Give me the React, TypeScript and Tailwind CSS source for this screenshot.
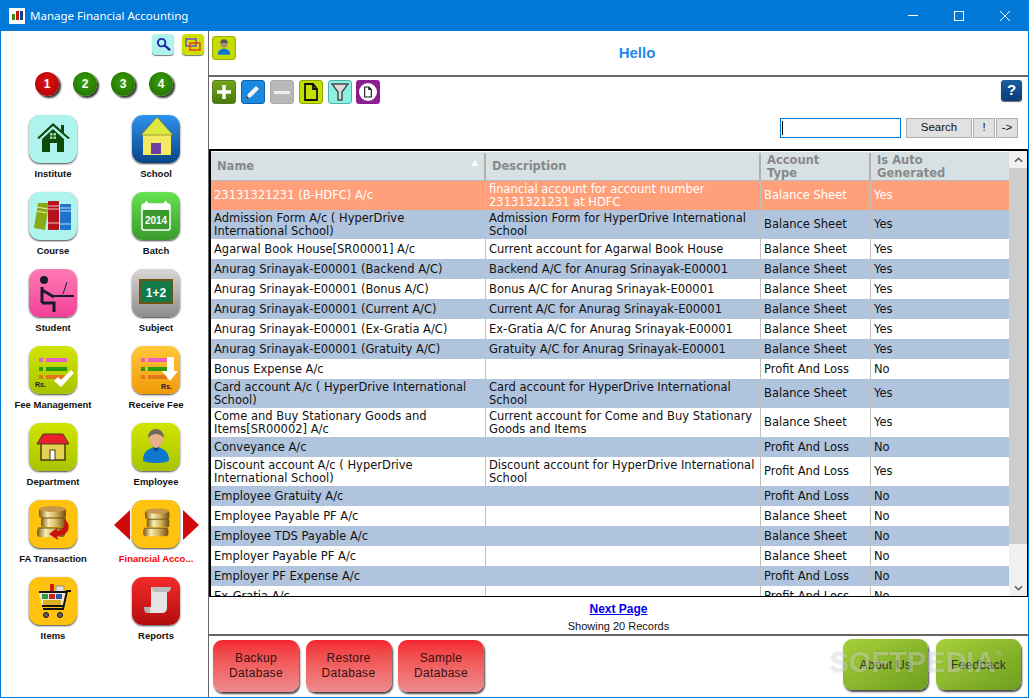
import type { ReactNode } from 'react';

type Row = { name: string; desc?: string; type: string; auto: string; h: 'one' | 'two'; bg: 'sel' | 'alt' | 'plain' };

const rows: Row[] = [
  { name: '23131321231 (B-HDFC) A/c', desc: 'financial account for account number 23131321231 at HDFC', type: 'Balance Sheet', auto: 'Yes', h: 'two', bg: 'sel' },
  { name: 'Admission Form A/c ( HyperDrive International School)', desc: 'Admission Form for HyperDrive International School', type: 'Balance Sheet', auto: 'Yes', h: 'two', bg: 'alt' },
  { name: 'Agarwal Book House[SR00001] A/c', desc: 'Current account for Agarwal Book House', type: 'Balance Sheet', auto: 'Yes', h: 'one', bg: 'plain' },
  { name: 'Anurag Srinayak-E00001 (Backend A/C)', desc: 'Backend A/C for Anurag Srinayak-E00001', type: 'Balance Sheet', auto: 'Yes', h: 'one', bg: 'alt' },
  { name: 'Anurag Srinayak-E00001 (Bonus A/C)', desc: 'Bonus A/C for Anurag Srinayak-E00001', type: 'Balance Sheet', auto: 'Yes', h: 'one', bg: 'plain' },
  { name: 'Anurag Srinayak-E00001 (Current A/C)', desc: 'Current A/C for Anurag Srinayak-E00001', type: 'Balance Sheet', auto: 'Yes', h: 'one', bg: 'alt' },
  { name: 'Anurag Srinayak-E00001 (Ex-Gratia A/C)', desc: 'Ex-Gratia A/C for Anurag Srinayak-E00001', type: 'Balance Sheet', auto: 'Yes', h: 'one', bg: 'plain' },
  { name: 'Anurag Srinayak-E00001 (Gratuity A/C)', desc: 'Gratuity A/C for Anurag Srinayak-E00001', type: 'Balance Sheet', auto: 'Yes', h: 'one', bg: 'alt' },
  { name: 'Bonus Expense A/c', type: 'Profit And Loss', auto: 'No', h: 'one', bg: 'plain' },
  { name: 'Card account A/c ( HyperDrive International School)', desc: 'Card account for HyperDrive International School', type: 'Balance Sheet', auto: 'Yes', h: 'two', bg: 'alt' },
  { name: 'Come and Buy Stationary Goods and Items[SR00002] A/c', desc: 'Current account for Come and Buy Stationary Goods and Items', type: 'Balance Sheet', auto: 'Yes', h: 'two', bg: 'plain' },
  { name: 'Conveyance A/c', type: 'Profit And Loss', auto: 'No', h: 'one', bg: 'alt' },
  { name: 'Discount account A/c ( HyperDrive International School)', desc: 'Discount account for HyperDrive International School', type: 'Profit And Loss', auto: 'Yes', h: 'two', bg: 'plain' },
  { name: 'Employee Gratuity A/c', type: 'Profit And Loss', auto: 'No', h: 'one', bg: 'alt' },
  { name: 'Employee Payable PF A/c', type: 'Balance Sheet', auto: 'No', h: 'one', bg: 'plain' },
  { name: 'Employee TDS Payable A/c', type: 'Balance Sheet', auto: 'No', h: 'one', bg: 'alt' },
  { name: 'Employer Payable PF A/c', type: 'Balance Sheet', auto: 'No', h: 'one', bg: 'plain' },
  { name: 'Employer PF Expense A/c', type: 'Profit And Loss', auto: 'No', h: 'one', bg: 'alt' },
  { name: 'Ex-Gratia A/c', type: 'Profit And Loss', auto: 'No', h: 'one', bg: 'plain' },
];

const rowBg = {
  sel: 'bg-[#ffa07a] text-white',
  alt: 'bg-[#b0c4de] text-[#111]',
  plain: 'bg-white text-[#111]',
};

function Coins({ arrow }: { arrow?: boolean }) {
  const id = arrow ? 'coinA' : 'coinB';
  return (
    <svg viewBox="0 0 48 48" className="w-12 h-12">
      <defs>
        <linearGradient id={id} x1="0" x2="1" y1="0" y2="0">
          <stop offset="0" stopColor="#7a5510" />
          <stop offset="0.3" stopColor="#f8ecb4" />
          <stop offset="0.6" stopColor="#d8b864" />
          <stop offset="1" stopColor="#6e4c0c" />
        </linearGradient>
      </defs>
      <g transform={arrow ? undefined : 'translate(4 3) scale(0.9)'}>
        <rect x="10" y="8" width="27" height="10" rx="3" fill={`url(#${id})`} />
        <ellipse cx="23.5" cy="9" rx="13.5" ry="3" fill="#c9964a" />
        <rect x="12" y="18" width="25" height="9" rx="2" fill={`url(#${id})`} />
        <path d="M12 18h25" stroke="#6e4c0c" />
        <rect x="8" y="28" width="28" height="9" rx="3" fill={`url(#${id})`} />
        <path d="M9 28h27" stroke="#6e4c0c" />
        {arrow && <path d="M35 19c8 5 6 17-7 17l1 4-9-6 8-6v3c6 0 9-6 7-12z" fill="#c8120c" />}
      </g>
    </svg>
  );
}

const tiles: { label: string; bg: string; icon: ReactNode; active?: boolean }[] = [
  {
    label: 'Institute',
    bg: 'bg-[#aef3ee]',
    icon: (
      <svg viewBox="0 0 48 48" className="w-12 h-12">
        <path d="M8 23 24 8l8 7v-5h3v8l6 5-2 1-15-13L10 24z" fill="#0f4a08" />
        <path d="M13 24 24 14l11 10v13H28v-9h-7v9h-8z" fill="#0f4a08" />
        <rect x="21" y="18" width="6" height="6" fill="#9fd8a8" />
        <path d="M24 18v6M21 21h6" stroke="#0f4a08" />
      </svg>
    ),
  },
  {
    label: 'School',
    bg: 'bg-gradient-to-b from-[#2f93ee] to-[#0a4488]',
    icon: (
      <svg viewBox="0 0 48 48" className="w-12 h-12">
        <rect x="11" y="20" width="28" height="20" fill="#f4ea62" />
        <path d="M9 20 25 2l16 18z" fill="#dfe83e" stroke="#6b6b20" strokeWidth="0.6" />
        <rect x="19" y="28" width="10" height="11" fill="#6f3fa8" />
      </svg>
    ),
  },
  {
    label: 'Course',
    bg: 'bg-[#aef3ee]',
    icon: (
      <svg viewBox="0 0 48 48" className="w-12 h-12">
        <path d="M9 11h11l-4 27-11-2z" fill="#88aa14" />
        <path d="M8 15l11 2M7 19l11 2" stroke="#e6efb0" />
        <rect x="19" y="9" width="11" height="29" rx="1" fill="#b5121c" />
        <path d="M19 14h11M19 17h11M19 31h11" stroke="#f0c0c0" />
        <rect x="31" y="12" width="11" height="26" rx="1" fill="#1f74c8" />
        <path d="M31 16h11M31 19h11M31 32h11" stroke="#bcdcf5" />
      </svg>
    ),
  },
  {
    label: 'Batch',
    bg: 'bg-gradient-to-b from-[#66e350] to-[#3a9a2d]',
    icon: (
      <svg viewBox="0 0 48 48" className="w-12 h-12">
        <rect x="10" y="12" width="28" height="26" rx="2" fill="#3a9a2d" stroke="#fff" strokeWidth="1.5" />
        <rect x="10" y="12" width="28" height="6" fill="#fff" />
        <rect x="13" y="9" width="3" height="6" rx="1.5" fill="#fff" />
        <rect x="32" y="9" width="3" height="6" rx="1.5" fill="#fff" />
        <text x="24" y="32" textAnchor="middle" fontSize="10" fontWeight="700" fill="#fff" fontFamily="Liberation Sans, sans-serif">2014</text>
      </svg>
    ),
  },
  {
    label: 'Student',
    bg: 'bg-gradient-to-b from-[#ff7ab4] to-[#f23f98]',
    icon: (
      <svg viewBox="0 0 48 48" className="w-12 h-12" fill="none" stroke="#1a1a2e" strokeWidth="3">
        <circle cx="15" cy="11" r="4" fill="#1a1a2e" stroke="none" />
        <path d="M13 18v16M13 21l12 7M13 34h12v9" />
        <path d="M22 27h23" strokeWidth="2" />
        <path d="M34 25l4-12" strokeWidth="1" />
      </svg>
    ),
  },
  {
    label: 'Subject',
    bg: 'bg-gradient-to-b from-[#dad6d6] to-[#8e8c8c]',
    icon: (
      <svg viewBox="0 0 48 48" className="w-12 h-12">
        <rect x="8" y="11" width="32" height="23" fill="#117a48" stroke="#6d5412" strokeWidth="2" />
        <text x="24" y="28" textAnchor="middle" fontSize="12" fontWeight="700" fill="#fff" fontFamily="Liberation Sans, sans-serif">1+2</text>
      </svg>
    ),
  },
  {
    label: 'Fee Management',
    bg: 'bg-gradient-to-b from-[#d2e500] to-[#a8c400]',
    icon: (
      <svg viewBox="0 0 48 48" className="w-12 h-12">
        <rect x="10" y="12" width="4" height="4" fill="#e85fc8" />
        <rect x="17" y="12" width="21" height="4" fill="#e85fc8" />
        <rect x="10" y="21" width="4" height="4" fill="#2a9a10" />
        <rect x="17" y="21" width="21" height="4" fill="#2a9a10" />
        <rect x="10" y="29" width="4" height="4" fill="#e0781a" />
        <rect x="17" y="29" width="19" height="4" fill="#e0781a" />
        <path d="M25 35l4-4 3 3 10-10 3 3-13 14z" fill="#fff" />
        <text x="6" y="41" fontSize="7" fontWeight="700" fill="#222" fontFamily="Liberation Sans, sans-serif">Rs.</text>
      </svg>
    ),
  },
  {
    label: 'Receive Fee',
    bg: 'bg-gradient-to-b from-[#ffc838] to-[#f09a00]',
    icon: (
      <svg viewBox="0 0 48 48" className="w-12 h-12">
        <rect x="9" y="12" width="4" height="4" fill="#e85fc8" />
        <rect x="16" y="12" width="21" height="4" fill="#e85fc8" />
        <rect x="9" y="21" width="4" height="4" fill="#2a9a10" />
        <rect x="16" y="21" width="21" height="4" fill="#2a9a10" />
        <rect x="9" y="29" width="4" height="4" fill="#e0781a" />
        <rect x="16" y="29" width="19" height="4" fill="#e0781a" />
        <path d="M35 11h7v14h4L38 35l-8-10h5z" fill="#fff" />
        <text x="29" y="43" fontSize="7" fontWeight="700" fill="#222" fontFamily="Liberation Sans, sans-serif">Rs.</text>
      </svg>
    ),
  },
  {
    label: 'Department',
    bg: 'bg-gradient-to-b from-[#d2e500] to-[#a8c400]',
    icon: (
      <svg viewBox="0 0 48 48" className="w-12 h-12">
        <rect x="12" y="19" width="24" height="18" fill="#e4d252" stroke="#4a3a18" strokeWidth="1.5" />
        <path d="M8 21l6-10h20l6 10z" fill="#e8212c" stroke="#4a3a18" strokeWidth="1" />
        <rect x="21" y="27" width="5" height="10" fill="#fff" stroke="#4a3a18" />
      </svg>
    ),
  },
  {
    label: 'Employee',
    bg: 'bg-gradient-to-b from-[#d2e500] to-[#a8c400]',
    icon: (
      <svg viewBox="0 0 48 48" className="w-12 h-12">
        <path d="M11 37c0-9 6-12 13-13 7 1 13 4 13 13 0 2-6 3-13 3s-13-1-13-3z" fill="#1078cc" />
        <path d="M20 23l4 6 4-6z" fill="#0c3f70" />
        <ellipse cx="24" cy="16" rx="7" ry="9" fill="#e8b088" />
        <path d="M16 15c0-6 4-9 8-9s8 3 8 9c-3-3-5-4-8-4s-5 1-8 4z" fill="#6e6a62" />
      </svg>
    ),
  },
  { label: 'FA Transaction', bg: 'bg-[#ffc20e]', icon: <Coins arrow /> },
  { label: 'Financial Acco...', bg: 'bg-[#ffc20e]', icon: <Coins />, active: true },
  {
    label: 'Items',
    bg: 'bg-[#ffc20e]',
    icon: (
      <svg viewBox="0 0 48 48" className="w-12 h-12">
        <rect x="21" y="7" width="4" height="9" fill="#c8201c" />
        <rect x="27" y="9" width="8" height="7" fill="#e0e0e0" stroke="#555" strokeWidth="0.5" />
        <path d="M10 15h27l-3 14H13z" fill="#efe9d0" />
        <rect x="13" y="17" width="6" height="5" fill="#2a9a40" />
        <rect x="20" y="17" width="6" height="5" fill="#c8201c" />
        <rect x="27" y="17" width="6" height="5" fill="#2a5ab0" />
        <rect x="14" y="23" width="18" height="5" fill="#dcae22" />
        <path d="M42 14h-4l-4 18H14M10 15h27M13 29h21" fill="none" stroke="#111" strokeWidth="2" />
        <circle cx="17" cy="38" r="2.5" fill="#666" stroke="#111" />
        <circle cx="31" cy="38" r="2.5" fill="#666" stroke="#111" />
      </svg>
    ),
  },
  {
    label: 'Reports',
    bg: 'bg-gradient-to-b from-[#f42a2a] to-[#b30c0c]',
    icon: (
      <svg viewBox="0 0 48 48" className="w-12 h-12">
        <path d="M19 10h20c-3 0-4 2-4 5v16c0 3-2 5-5 5H13c3 0 4-1 4-4v-1l2-1z" fill="#e4e4e4" />
        <path d="M12 30h6v6h-3c-2 0-3-3-3-6z" fill="#b4b4b4" />
        <path d="M19 10h20c0 3-2 5-4 5H21z" fill="#bdbdbd" />
      </svg>
    ),
  },
];

function Tile({ label, bg, icon, active }: { label: string; bg: string; icon: ReactNode; active?: boolean }) {
  return (
    <div className="flex flex-col items-center h-[77px]">
      <div className="relative">
        {active && (
          <div className="absolute left-[-18px] top-[10px] w-0 h-0 border-y-[15px] border-y-transparent border-r-[16px] border-r-[#d00a0a]" />
        )}
        <div className={`w-12 h-12 rounded-[11px] overflow-hidden shadow-[0_1px_2px_#444] ${bg}`}>{icon}</div>
        {active && (
          <div className="absolute right-[-19px] top-[10px] w-0 h-0 border-y-[15px] border-y-transparent border-l-[16px] border-l-[#d00a0a]" />
        )}
      </div>
      <span className={`mt-[5px] text-[9.5px] leading-[12px] font-bold whitespace-nowrap ${active ? 'text-[#f00]' : 'text-[#111]'}`}>{label}</span>
    </div>
  );
}

function Ball({ n, bg }: { n: number; bg: string }) {
  return (
    <div className={`w-[24px] h-[24px] rounded-full flex items-center justify-center text-white text-[12px] font-bold shadow-[2px_2px_2px_#333] ${bg}`}>{n}</div>
  );
}

function ToolBtn({ bg, children }: { bg: string; children: ReactNode }) {
  return <div className={`w-6 h-6 rounded-[3px] border flex items-center justify-center ${bg}`}>{children}</div>;
}

function RedBtn({ top, bottom }: { top: string; bottom: string }) {
  return (
    <div className="w-[86px] h-[52px] rounded-[9px] bg-gradient-to-b from-[#f2232f] to-[#ec8a8e] shadow-[1px_2px_2px_#444] flex flex-col items-center justify-center text-[12px] leading-[15px] text-[#3a1010] tracking-[0.3px]">
      <span>{top}</span>
      <span>{bottom}</span>
    </div>
  );
}

function GreenBtn({ label }: { label: string }) {
  return (
    <div className="w-[85px] h-[51px] rounded-[9px] bg-gradient-to-br from-[#a6d13c] to-[#6f9e1e] shadow-[1px_2px_2px_#444] flex items-center justify-center text-[12px] text-[#333] tracking-[0.3px]">
      {label}
    </div>
  );
}

export default function App() {
  return (
    <div className="w-[1029px] h-[698px] flex flex-col bg-white overflow-hidden border-x border-b border-[#0078d7] font-['Liberation_Sans',sans-serif]">
      <div className="h-[31px] shrink-0 -mx-px bg-[#0078d7] flex items-center text-white">
        <div className="ml-[9px] w-4 h-4 bg-white flex items-center justify-center gap-px">
          <span className="w-[3px] h-[6px] mt-[3px] bg-[#3a8a20]" />
          <span className="w-[3px] h-[9px] bg-[#c01818]" />
          <span className="w-[3px] h-[9px] bg-[#1a3f80]" />
        </div>
        <span className="ml-[5px] text-[11.5px] font-['Noto_Sans',sans-serif]">Manage Financial Accounting</span>
        <div className="ml-auto flex items-center h-full pr-px">
          <div className="w-[46px] flex justify-center"><span className="w-[10px] h-px bg-white" /></div>
          <div className="w-[46px] flex justify-center"><span className="w-[10px] h-[10px] border border-white" /></div>
          <div className="w-[46px] flex justify-center">
            <svg viewBox="0 0 10 10" className="w-[10px] h-[10px]" stroke="#fff"><path d="M0 0l10 10M10 0L0 10" /></svg>
          </div>
        </div>
      </div>

      <div className="flex flex-1 min-h-0">
        <aside className="w-[207px] shrink-0 flex flex-col">
          <div className="flex justify-end gap-[8px] pr-[4px] pt-[3px]">
            <div className="w-[22px] h-[21px] rounded-[4px] bg-[#aef3ee] shadow-[0_1px_1px_#777] flex items-center justify-center">
              <svg viewBox="0 0 16 16" className="w-[15px] h-[15px]" fill="none" stroke="#2222a8" strokeWidth="2"><circle cx="6" cy="6" r="4" /><path d="M9 9l6 5" strokeWidth="2.5" /></svg>
            </div>
            <div className="w-[22px] h-[21px] rounded-[4px] bg-[#cfe000] shadow-[0_1px_1px_#777] flex items-center justify-center">
              <svg viewBox="0 0 16 16" className="w-[16px] h-[16px]" fill="none" strokeWidth="1.5"><rect x="1" y="2" width="10" height="7" stroke="#7050c8" /><rect x="5" y="6" width="10" height="7" stroke="#e8401c" /></svg>
            </div>
          </div>
          <div className="flex gap-[14px] pl-[34px] mt-[17px]">
            <Ball n={1} bg="bg-[radial-gradient(circle_at_50%_40%,#e01010,#a80404)]" />
            <Ball n={2} bg="bg-[radial-gradient(circle_at_50%_40%,#389c08,#1f6c02)]" />
            <Ball n={3} bg="bg-[radial-gradient(circle_at_50%_40%,#389c08,#1f6c02)]" />
            <Ball n={4} bg="bg-[radial-gradient(circle_at_50%_40%,#389c08,#1f6c02)]" />
          </div>
          <div className="grid grid-cols-[104px_102px] mt-[19px]">
            {tiles.map(t => (
              <Tile key={t.label} {...t} />
            ))}
          </div>
        </aside>

        <main className="flex-1 min-w-0 flex flex-col border-l border-[#666]">
          <div className="h-[44px] shrink-0 relative flex items-center justify-center pl-[37px] border-b-2 border-[#666] box-content">
            <div className="absolute left-[3px] top-[5px] w-6 h-6 rounded-[3px] bg-[#c4dc00] border border-[#9ab000] flex items-center justify-center">
              <svg viewBox="0 0 48 48" className="w-5 h-5">
                <path d="M9 40c0-10 7-14 15-15 8 1 15 5 15 15z" fill="#1078cc" />
                <circle cx="24" cy="14" r="9" fill="#b08a70" />
                <path d="M15 12c0-6 4-9 9-9s9 3 9 9z" fill="#555" />
              </svg>
            </div>
            <span className="text-[15px] font-bold text-[#2288ee]">Hello</span>
          </div>

          <div className="relative h-[72px] shrink-0">
            <div className="flex pl-[3px] pt-[3px] gap-[5px]">
              <ToolBtn bg="bg-gradient-to-b from-[#74a818] to-[#4a7a08] border-[#5a7a30]">
                <svg viewBox="0 0 16 16" className="w-4 h-4" stroke="#fff" strokeWidth="3.5"><path d="M8 1v14M1 8h14" /></svg>
              </ToolBtn>
              <ToolBtn bg="bg-[#1a8ae0] border-[#1060a8]">
                <svg viewBox="0 0 16 16" className="w-4 h-4"><path d="M1 15l2-5 8-8 3 3-8 8z" fill="#f4f4f4" /><path d="M1 15l1-3 2 2z" fill="#222" /></svg>
              </ToolBtn>
              <ToolBtn bg="bg-[#b8b8b8] border-[#aaa]"><span className="w-4 h-[3px] bg-[#eee]" /></ToolBtn>
              <ToolBtn bg="bg-[#c4e000] border-[#90a800]">
                <svg viewBox="0 0 16 20" className="w-4 h-5" fill="none" stroke="#111" strokeWidth="1.8"><path d="M2 2h8l4 5v11H2zM10 2v5h4" /></svg>
              </ToolBtn>
              <ToolBtn bg="bg-[#8cf0e4] border-[#50b0a8]">
                <svg viewBox="0 0 18 20" className="w-[18px] h-5" fill="#ddd" stroke="#444" strokeWidth="1.4"><path d="M1 2h16l-6 8v8H7v-8z" /></svg>
              </ToolBtn>
              <div className="w-6 h-6 -ml-[1px] rounded-[3px] bg-[#8a1e90] flex items-center justify-center">
                <div className="w-[18px] h-[18px] rounded-full bg-white flex items-center justify-center">
                  <svg viewBox="0 0 12 14" className="w-[10px] h-3" fill="none" stroke="#111" strokeWidth="1.3"><path d="M2 1h5l3 3v9H2zM7 1v3h3" /></svg>
                </div>
              </div>
            </div>
            <div className="absolute right-[6px] top-[3px] w-[21px] h-[21px] rounded-[3px] bg-gradient-to-b from-[#1a5ea0] to-[#0a3a78] shadow-[0_1px_1px_#666] flex items-center justify-center text-white text-[15px] font-bold">?</div>
            <div className="absolute right-[10px] top-[41px] flex items-center text-[11.5px] text-[#111]">
              <div className="w-[121px] h-5 border border-[#0078d7] bg-white flex items-center pl-[1px]"><span className="w-px h-[14px] bg-black" /></div>
              <div className="ml-[5px] w-[66px] h-5 bg-[#e1e1e1] border border-[#adadad] flex items-center justify-center">Search</div>
              <div className="ml-[1px] w-[22px] h-5 bg-[#e1e1e1] border border-[#adadad] flex items-center justify-center">!</div>
              <div className="ml-[1px] w-[22px] h-5 bg-[#e1e1e1] border border-[#adadad] flex items-center justify-center">-&gt;</div>
            </div>
          </div>

          <div className="h-[448px] shrink-0 border-y-2 border-l-2 border-r border-black border-b-[1px] flex min-h-0 overflow-hidden">
            <div className="w-[798px] shrink-0 overflow-hidden font-['DejaVu_Sans',sans-serif] text-[11.5px] leading-[13px]">
              <div className="h-[30px] pt-px flex bg-[#d7e1e3] border-y border-[#b8b8b8] border-t-white font-bold text-[#888]">
                <div className="w-[275px] pl-[6px] flex items-center justify-between pr-[6px] border-r-2 border-[#b0b0b0]">
                  <span>Name</span>
                  <span className="text-[8px] text-white mt-[-8px]">▲</span>
                </div>
                <div className="w-[275px] pl-[6px] flex items-center border-r-2 border-[#b0b0b0]">Description</div>
                <div className="w-[110px] pl-[6px] flex items-center border-r-2 border-[#b0b0b0]">Account<br />Type</div>
                <div className="flex-1 pl-[6px] flex items-center">Is Auto<br />Generated</div>
              </div>
              {rows.map(r => (
                <div key={r.name} className={`flex shrink-0 ${r.h === 'two' ? 'h-[29px]' : 'h-5'} ${rowBg[r.bg]}`}>
                  <div className="w-[275px] pl-[3px] pr-[8px] flex items-center border-r border-[#c0c0c0]"><span>{r.name}</span></div>
                  <div className="w-[275px] pl-[3px] flex items-center border-r border-[#c0c0c0]"><span>{r.desc}</span></div>
                  <div className="w-[110px] pl-[3px] flex items-center border-r border-[#c0c0c0]">{r.type}</div>
                  <div className="flex-1 pl-[3px] flex items-center">{r.auto}</div>
                </div>
              ))}
            </div>
            <div className="flex-1 bg-[#f0f0f0] flex flex-col items-center">
              <div className="h-[17px] flex items-center justify-center">
                <svg viewBox="0 0 10 6" className="w-[9px] h-[6px]" fill="none" stroke="#555" strokeWidth="1.6"><path d="M1 5l4-4 4 4" /></svg>
              </div>
              <div className="w-full h-[376px] bg-[#cdcdcd]" />
              <div className="mt-auto h-[17px] flex items-center justify-center">
                <svg viewBox="0 0 10 6" className="w-[9px] h-[6px]" fill="none" stroke="#555" strokeWidth="1.6"><path d="M1 1l4 4 4-4" /></svg>
              </div>
            </div>
          </div>

          <div className="h-[37px] shrink-0 flex flex-col items-center pt-[5px]">
            <a className="text-[12px] leading-[14px] font-bold text-[#0000ee] underline">Next Page</a>
            <span className="text-[11px] leading-[14px] mt-[3px] text-[#111]">Showing 20 Records</span>
          </div>

          <div className="relative flex-1 border-t-2 border-[#666] flex items-start pl-[4px] pt-[4px]">
            <div className="flex gap-[6.5px]">
              <RedBtn top="Backup" bottom="Database" />
              <RedBtn top="Restore" bottom="Database" />
              <RedBtn top="Sample" bottom="Database" />
            </div>
            <div className="ml-auto flex gap-[8px] pr-[7px] mt-[-1px]">
              <GreenBtn label="About Us" />
              <GreenBtn label="Feedback" />
            </div>
            <span className="absolute right-[26px] top-[8px] text-[29px] leading-[36px] font-bold text-white/35 [text-shadow:0_0_2px_rgba(0,0,0,0.15)] pointer-events-none">
              SOFTPEDIA<sup className="text-[9px] align-super">®</sup>
            </span>
          </div>
        </main>
      </div>
    </div>
  );
}
